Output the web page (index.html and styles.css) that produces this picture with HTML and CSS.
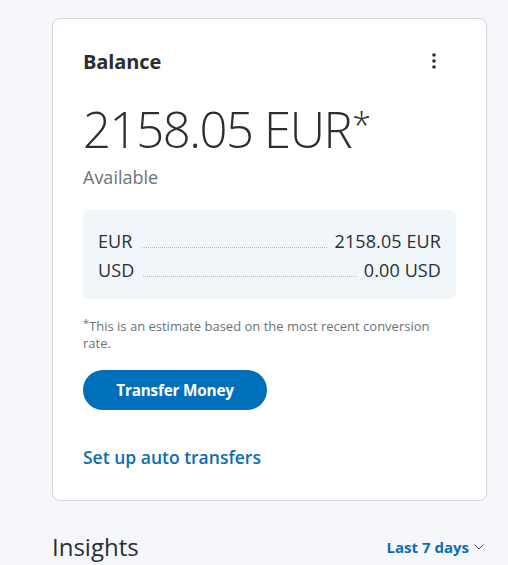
FILE: index.html
```html
<!DOCTYPE html>
<html>
<head>
<meta charset="utf-8">
<link rel="stylesheet" href="styles.css">
</head>
<body>
<div class="page">
  <section class="card">
    <div class="card-head">
      <h2 class="title">Balance</h2>
      <button class="more" aria-label="More">
        <svg width="6" height="18" viewBox="0 0 6 18"><circle cx="3" cy="3" r="1.8" fill="#2c2e2f"/><circle cx="3" cy="9" r="1.8" fill="#2c2e2f"/><circle cx="3" cy="15" r="1.8" fill="#2c2e2f"/></svg>
      </button>
    </div>
    <div class="amount">2158.05 EUR<span class="star">*</span></div>
    <div class="available">Available</div>
    <div class="currencies">
      <div class="row"><span>EUR</span><span class="dots"></span><span>2158.05 EUR</span></div>
      <div class="row"><span>USD</span><span class="dots"></span><span>0.00 USD</span></div>
    </div>
    <p class="note"><span class="mark">*</span>This is an estimate based on the most recent conversion rate.</p>
    <button class="transfer">Transfer Money</button>
    <a class="auto" href="#">Set up auto transfers</a>
  </section>
  <div class="insights">
    <h2 class="ins-title">Insights</h2>
    <a class="range" href="#">Last 7 days
      <svg width="10" height="6" viewBox="0 0 10 6"><path d="M0.5 0.5 L5 5 L9.5 0.5" fill="none" stroke="#4a5058" stroke-width="1"/></svg>
    </a>
  </div>
</div>
</body>
</html>
```
FILE: styles.css
```css
html, body { margin: 0; padding: 0; }
body {
  background: #f5f7fa;
  font-family: "Open Sans", "Noto Sans", sans-serif;
  color: #2c2e2f;
  width: 508px;
  height: 565px;
  overflow: hidden;
}
.page {
  padding: 18px 21px 0 52px;
}
.card {
  background: #fff;
  border: 1px solid #d3d6da;
  border-radius: 8px;
  padding: 22px 30px 31px 30px;
}
.card-head {
  display: flex;
  justify-content: space-between;
  align-items: center;
  height: 40px;
}
.title {
  margin: 0;
  font-size: 20px;
  font-weight: 700;
  letter-spacing: -0.1px;
}
.more {
  background: none;
  border: 0;
  padding: 0;
  margin-right: 19px;
  display: flex;
}
.amount {
  font-size: 49px;
  font-weight: 300;
  line-height: 60px;
  margin-top: 18px;
  letter-spacing: -1.4px;
}
.star {
  display: inline-block;
  vertical-align: 10px;
  font-size: 34px;
  line-height: 1;
  margin-left: 1px;
}
.available {
  font-size: 18px;
  color: #6c7378;
  margin-top: 6px;
  line-height: 24px;
}
.currencies {
  margin-top: 21px;
  background: #f1f6fb;
  border-radius: 6px;
  padding: 19px 15px 17px 15px;
  display: flex;
  flex-direction: column;
  gap: 5px;
}
.row {
  display: flex;
  align-items: baseline;
  font-size: 18px;
  line-height: 24px;
  letter-spacing: 0.1px;
  color: #2c2e2f;
}
.dots {
  flex: 1;
  border-bottom: 1px dotted #b4b8bc;
  margin: 0 8px 0 9px;
}
.note {
  margin: 19px 0 0 0;
  font-size: 13px;
  line-height: 16px;
  color: #6c7378;
}
.mark {
  font-size: 11px;
  position: relative;
  top: -4px;
}
.transfer {
  display: block;
  margin-top: 19px;
  width: 184px;
  height: 40px;
  border: 0;
  border-radius: 20px;
  background: #0070ba;
  color: #fff;
  font-family: inherit;
  font-size: 15.3px;
  font-weight: 700;
  letter-spacing: -0.2px;
}
.auto {
  display: inline-block;
  margin-top: 35px;
  color: #0c6cb5;
  text-decoration: none;
  font-size: 17.5px;
  font-weight: 600;
  line-height: 24px;
}
.insights {
  display: flex;
  justify-content: space-between;
  align-items: center;
  margin-top: 30px;
  padding-right: 3px;
}
.ins-title {
  margin: 0;
  font-size: 24px;
  font-weight: 400;
  line-height: 32px;
}
.range {
  color: #0c6cb5;
  text-decoration: none;
  font-size: 15px;
  font-weight: 700;
  line-height: 20px;
  display: flex;
  align-items: center;
  gap: 5px;
}
```
